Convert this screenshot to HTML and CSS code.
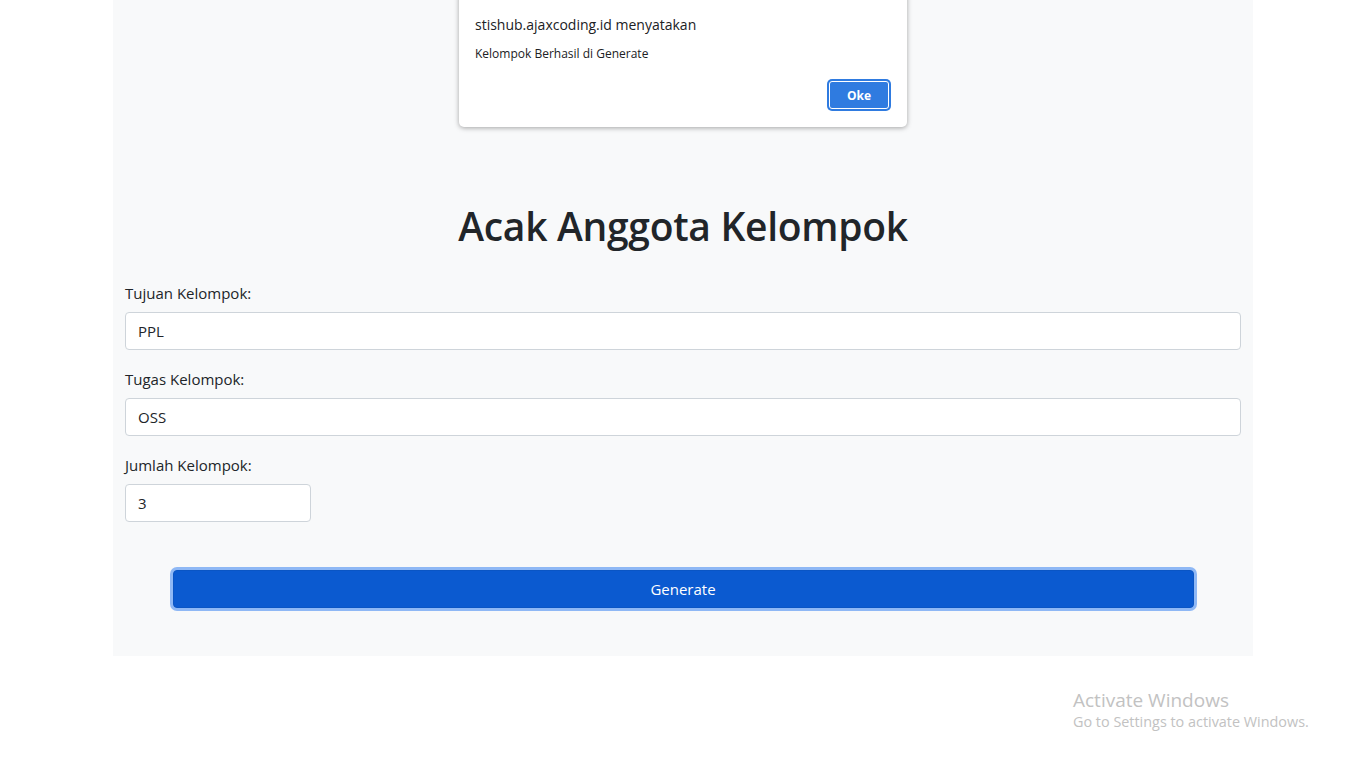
FILE: index.html
```html
<!DOCTYPE html>
<html lang="id">
<head>
<meta charset="utf-8">
<title>Acak Anggota Kelompok</title>
<link rel="stylesheet" href="styles.css">
</head>
<body>
<main class="page">
  <h1 class="title">Acak Anggota Kelompok</h1>
  <form class="form">
    <div class="group">
      <label class="label" for="tujuan">Tujuan Kelompok:</label>
      <input class="input" id="tujuan" type="text" value="PPL">
    </div>
    <div class="group">
      <label class="label" for="tugas">Tugas Kelompok:</label>
      <input class="input" id="tugas" type="text" value="OSS">
    </div>
    <div class="group">
      <label class="label" for="jumlah">Jumlah Kelompok:</label>
      <input class="input input-small" id="jumlah" type="text" value="3">
    </div>
    <div class="actions">
      <button type="button" class="btn-generate">Generate</button>
    </div>
  </form>
</main>

<div class="dialog">
  <div class="dialog-title">stishub.ajaxcoding.id menyatakan</div>
  <div class="dialog-msg">Kelompok Berhasil di Generate</div>
  <div class="dialog-actions">
    <button type="button" class="dialog-btn">Oke</button>
  </div>
</div>

<div class="watermark">
  <div class="wm-title">Activate Windows</div>
  <div class="wm-sub">Go to Settings to activate Windows.</div>
</div>
</body>
</html>
```

FILE: styles.css
```css
* { box-sizing: border-box; }

body {
  margin: 0;
  background: #ffffff;
  font-family: "Open Sans", "Noto Sans", sans-serif;
  color: #212529;
}

.page {
  width: 1140px;
  margin: 0 auto;
  background: #f8f9fa;
  padding: 202px 12px 48px;
}

.title {
  margin: 0 0 31px;
  font-size: 39px;
  font-weight: 600;
  line-height: 48px;
  text-align: center;
  color: #212529;
  letter-spacing: -0.3px;
}

.form { margin: 0; }

.group {
  display: flex;
  flex-direction: column;
  align-items: flex-start;
  margin-bottom: 17px;
}

.label {
  font-size: 15px;
  line-height: 24px;
  margin-bottom: 7px;
  color: #212529;
}

.input {
  width: 100%;
  height: 38px;
  padding: 6px 12px;
  font-family: inherit;
  font-size: 15px;
  color: #212529;
  background: #ffffff;
  border: 1px solid #ced4da;
  border-radius: 4px;
}

.input-small { width: 186px; }

.actions {
  display: flex;
  justify-content: center;
  padding-top: 31px;
}

.btn-generate {
  width: 1021px;
  height: 38px;
  font-family: inherit;
  font-size: 15px;
  color: #ffffff;
  background: #0b5ad0;
  border: 1px solid #0a55c4;
  border-radius: 4px;
  box-shadow: 0 0 0 3px #8fb8f5;
}

.dialog {
  position: absolute;
  top: -6px;
  left: 459px;
  width: 448px;
  height: 133px;
  background: #ffffff;
  border-radius: 0 0 5px 5px;
  box-shadow: 0 1px 5px rgba(0, 0, 0, 0.35);
  padding: 21px 16px 0;
  display: flex;
  flex-direction: column;
}

.dialog-title {
  font-size: 14px;
  line-height: 20px;
  color: #202124;
}

.dialog-msg {
  margin-top: 11px;
  font-size: 12px;
  line-height: 16px;
  color: #202124;
}

.dialog-actions {
  display: flex;
  justify-content: flex-end;
  margin-top: 19px;
}

.dialog-btn {
  width: 60px;
  height: 28px;
  margin-right: 2px;
  font-family: inherit;
  font-size: 12px;
  font-weight: 700;
  color: #ffffff;
  background: #2f7be0;
  border: 1px solid #ffffff;
  border-radius: 3px;
  box-shadow: 0 0 0 2px #2f7be0;
}

.watermark {
  position: absolute;
  left: 1073px;
  top: 687px;
  color: #c2c2c2;
}

.wm-title {
  font-size: 19px;
  line-height: 26px;
}

.wm-sub {
  font-size: 14.4px;
  line-height: 18px;
}
```
